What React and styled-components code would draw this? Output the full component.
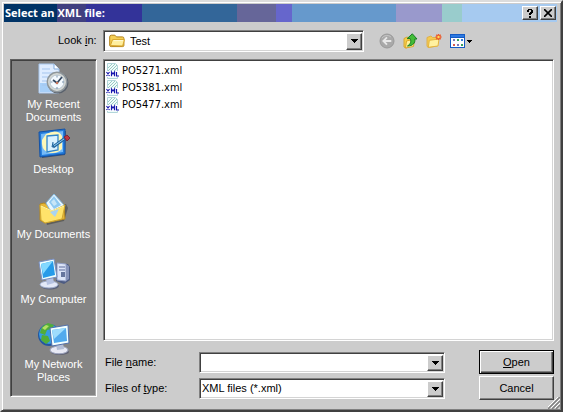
import React, { useState } from "react";
import styled, { createGlobalStyle } from "styled-components";

const GlobalStyle = createGlobalStyle`
  *, *::before, *::after { box-sizing: border-box; }
  body { margin: 0; background: #ccc; }
  body, button, input, select { font: 11px/13px "Liberation Sans", Arial, sans-serif; color: #000; }
`;

const Dialog = styled.main`
  display: flex;
  flex-direction: column;
  min-height: 100vh;
  padding: 2px 4px 10px 2px;
  background: #ccc;
  border: 2px solid;
  border-color: #dcdcdc #404040 #404040 #dcdcdc;
  box-shadow: inset 1px 1px #fff, inset -1px -1px #808080;
`;

const TitleBar = styled.header`
  display: flex;
  align-items: center;
  height: 18px;
  flex: none;
  padding: 0 1px;
  background: linear-gradient(90deg,
    #003366 53px, #404080 53px 82px, #333399 82px 138px, #336699 138px 233px,
    #666699 233px 272px, #6666cc 272px 288px, #6699cc 288px 392px,
    #9999cc 392px 438px, #99cccc 438px 458px, #a6caf0 458px);
`;

const Title = styled.h1`
  flex: 1;
  margin: 0;
  font: bold 11px/16px "Open Sans", "Noto Sans", sans-serif;
  color: #fff;
`;

const CaptionButtons = styled.div`
  display: flex;
  gap: 2px;
`;

const BevelButton = styled.button`
  display: flex;
  align-items: center;
  justify-content: center;
  padding: 0;
  background: #ccc;
  border: 1px solid;
  border-color: #fff #404040 #404040 #fff;
  box-shadow: inset -1px -1px #808080;
`;

const CaptionButton = styled(BevelButton)`
  width: 16px;
  height: 14px;
`;

const Toolbar = styled.div`
  display: flex;
  align-items: center;
  height: 37px;
  padding: 0 3px 0 54px;
`;

const FieldLabel = styled.label`
  white-space: nowrap;
`;

const LookInLabel = styled(FieldLabel)`
  width: 45px;
`;

const Combo = styled.div`
  flex: 1;
  display: grid;
  grid-template-columns: 1fr 16px;
  align-items: stretch;
  height: ${(p) => (p.$tall ? 22 : 21)}px;
  min-width: 0;
  background: #fff;
  border: 1px solid;
  border-color: #808080 #fff #fff #808080;
  box-shadow: inset 1px 1px #404040, inset -1px -1px #d4d4d4;
  padding: 2px 1px 1px 2px;
`;

const Select = styled.select`
  grid-area: 1 / 1 / 2 / 3;
  appearance: none;
  min-width: 0;
  padding: 0 18px 0 ${(p) => (p.$withIcon ? 24 : 0)}px;
  border: 0;
  border-radius: 0;
  background: transparent;
  outline: none;
`;

const TextInput = styled.input`
  min-width: 0;
  padding: 0 2px;
  border: 0;
  outline: none;
`;

const ComboIcon = styled.span`
  grid-area: 1 / 1 / 2 / 2;
  display: flex;
  align-items: center;
  padding-left: 3px;
  pointer-events: none;
`;

const ComboArrow = styled(BevelButton)`
  grid-area: 1 / 2 / 2 / 3;
  pointer-events: ${(p) => (p.as === "span" ? "none" : "auto")};
`;

const Tools = styled.div`
  display: flex;
  align-items: center;
  gap: 8px;
  width: 190px;
  padding-left: 15px;
`;

const ToolButton = styled.button`
  display: flex;
  align-items: center;
  padding: 0;
  border: 0;
  background: none;
`;

const Body = styled.div`
  flex: 1;
  display: grid;
  grid-template-columns: 87px minmax(0, 1fr);
  gap: 6px;
  padding: 0 3px 0 6px;
`;

const Places = styled.nav`
  align-self: start;
  display: flex;
  flex-direction: column;
  padding: 3px 1px 8px;
  background: #848484;
  border: 1px solid;
  border-color: #606060 #fff #fff #606060;
  box-shadow: inset 1px 1px #404040, inset -1px -1px #aaa;
`;

const Place = styled.button`
  display: flex;
  flex-direction: column;
  align-items: center;
  gap: 3px;
  height: 65px;
  padding: 0;
  border: 0;
  background: none;
  color: #fff;
`;

const PlaceName = styled.span`
  max-width: 78px;
`;

const Main = styled.section`
  display: flex;
  flex-direction: column;
  gap: 9px;
  min-width: 0;
`;

const FileList = styled.ul`
  flex: 1;
  margin: 0;
  padding: 2px;
  list-style: none;
  background: #fff;
  border: 1px solid;
  border-color: #808080 #fff #fff #808080;
  box-shadow: inset 1px 1px #404040, inset -1px -1px #d4d4d4;
`;

const FileRow = styled.li`
  display: flex;
  align-items: center;
  gap: 3px;
  height: 17px;
  font: 11px/17px "DejaVu Sans Condensed", "DejaVu Sans", sans-serif;
`;

const Form = styled.form`
  display: grid;
  grid-template-columns: minmax(0, 1fr) 75px;
  column-gap: 34px;
  row-gap: 2px;
  align-items: center;
`;

const Field = styled.div`
  display: grid;
  grid-template-columns: 94px minmax(0, 1fr);
  align-items: center;
  padding-left: 2px;
`;

const ActionButton = styled(BevelButton)`
  display: block;
  height: 24px;
  ${(p) => p.$primary && `
    border-color: #000;
    box-shadow: inset 1px 1px #fff, inset -1px -1px #404040, inset -2px -2px #808080;
  `}
`;

const Grip = styled.svg`
  position: absolute;
  right: 3px;
  bottom: 3px;
`;

const Frame = styled.div`
  position: relative;
`;

const Arrow = () => (
  <svg width="7" height="4" viewBox="0 0 7 4" shapeRendering="crispEdges" aria-hidden="true">
    <path d="M0 0h7v1H6v1H5v1H4v1H3V3H2V2H1V1H0z" />
  </svg>
);

const FolderIcon = () => (
  <svg width="16" height="14" viewBox="0 0 16 14" aria-hidden="true">
    <path d="M.7 11V3Q.7 1.2 2.3 1.2h3.6l1.6 1.7h6q1.4 0 1.4 1.5v7q0 1.2-1.4 1.2H2.2Q.7 12.6.7 11z" fill="#f5cf55" stroke="#b28219" />
    <path d="M1.4 11.6 3.5 5.6h12L13.6 12z" fill="#ffef9e" stroke="#d7a52b" />
    <path d="M4.5 6.6h9.5" stroke="#fffbd8" />
  </svg>
);

const BackIcon = () => (
  <svg width="16" height="16" viewBox="0 0 16 16" aria-hidden="true">
    <circle cx="8" cy="8" r="7" fill="#a9a9a9" stroke="#999" />
    <path d="M3 5a6 6 0 0 1 9-1" fill="none" stroke="#c4c4c4" />
    <path d="M12.3 8H4.6M8 4.3 4.3 8 8 11.7" fill="none" stroke="#e8e8e8" strokeWidth="1.8" />
  </svg>
);

const UpIcon = () => (
  <svg width="15" height="16" viewBox="0 0 15 16" aria-hidden="true">
    <path d="M1 5.5 4 4l2 1.2 4-1.5v9L3 15l-2-1z" fill="#f4cf48" stroke="#d5a638" />
    <path d="m2.5 15 1-7 8-2-1 7.5z" fill="#fff29c" stroke="#dda72c" />
    <path d="M4.5 13C9.6 13 12.6 10 11.8 6H14L9.3.8 4.2 5.6h3C8.4 8.7 7.8 10.9 4.5 13z" fill="#43bd38" stroke="#187d25" />
  </svg>
);

const NewFolderIcon = () => (
  <svg width="16" height="16" viewBox="0 0 16 16" aria-hidden="true">
    <path d="M1 4.5 5 3l1.5 1.5H11V13L2 14.5 1 13z" fill="#f4cb51" stroke="#dfb04a" />
    <path d="m2.3 14.3 1-7L13 6l-1 7z" fill="#fff1a0" stroke="#e3b33e" />
    <path d="M12.5 1v6M9.5 4h6M10.3 1.8l4.4 4.4M14.7 1.8l-4.4 4.4" stroke="#eb5a2c" strokeWidth="1.4" />
    <circle cx="12.5" cy="4" r="1.2" fill="#ffdc57" />
  </svg>
);

const ViewIcon = () => (
  <svg width="22" height="16" viewBox="0 0 22 16" shapeRendering="crispEdges" aria-hidden="true">
    <path d="M0 1h15v14H0z" fill="#155bc4" />
    <path d="M1 2h13v2H1z" fill="#2c79e2" />
    <path d="M1 5h13v9H1z" fill="#fff" />
    <path d="M3 6h2v2H3zM7 11h2v2H7z" fill="#7d78b8" />
    <path d="M7 6h2v2H7zM11 11h2v2h-2z" fill="#3aa15b" />
    <path d="M11 6h2v2h-2z" fill="#397dd6" />
    <path d="M3 11h2v2H3z" fill="#d85a4e" />
    <path d="M17 7h5v1h-1v1h-1v1h-1V9h-1V8h-1z" />
  </svg>
);

const XmlIcon = () => (
  <svg width="13" height="16" viewBox="0 0 13 16" aria-hidden="true">
    <path d="M1.5.5h8l2 2v13h-10z" fill="#f1fbfb" stroke="#b2d6da" />
    <path d="m2 5 4-4M2 8l7-7M4 9l7-7M7 9l4-4" stroke="#98ccc3" />
    <path d="M0 8h13v6H0z" fill="#fff" />
    <path d="m.5 9 3 4m0-4-3 4M5.5 13.3V9l1.5 2 1.5-2v4.3M10.5 9v4H13" fill="none" stroke="#1616ad" strokeWidth="1.2" />
  </svg>
);

const LargeIcon = ({ children }) => (
  <svg width="32" height="32" viewBox="0 0 32 32" aria-hidden="true">{children}</svg>
);

const RecentIcon = () => (
  <LargeIcon>
    <path d="M1 1h15l5 5v24H1z" fill="#deecff" stroke="#a9c8ee" />
    <path d="M2 20h18v9H2z" fill="#a7cff8" />
    <path d="M16 1v5h5" fill="#fff" stroke="#83acdc" />
    <path d="M4 6h8M4 10h11M4 14h8M4 18h6M4 22h5" stroke="#a5c5ee" />
    <circle cx="20" cy="20" r="10.5" fill="#5a626d" />
    <circle cx="19" cy="19" r="9.7" fill="#d5d8d4" stroke="#8f979c" strokeWidth="1.5" />
    <circle cx="19" cy="19" r="7" fill="#f4faff" stroke="#b8c5d0" />
    <path d="m15 17 4 3 5-6" fill="none" stroke="#34475f" strokeWidth="1.7" />
    <path d="M19 12.5v2M19 24v2M12.5 19h2M24 19h2" stroke="#7991aa" />
    <circle cx="19" cy="20" r="1.3" fill="#c9755a" />
  </LargeIcon>
);

const DesktopIcon = () => (
  <LargeIcon>
    <path d="M4 5 28 3l-1 24-23 3z" fill="#243957" opacity=".7" />
    <path d="M1 4 27 1v25L2 29z" fill="#227bdb" stroke="#1452a5" />
    <path d="m3 6 22-3v21L4 27z" fill="#75baf8" />
    <path d="M8 6Q20 0 24 8v13Q18 27 9 24 3 21 4 12z" fill="#fff8b8" />
    <path d="m9 8 11-1v15L9 24z" fill="#d9f1ff" stroke="#3285c9" strokeWidth="1.3" />
    <path d="m15 14-1 5 4-1" fill="#8fc6ec" stroke="#27689f" />
    <path d="m15 19 11-8" stroke="#24669d" strokeWidth="3" />
    <path d="m16 18 10-7" stroke="#8fcdf5" />
    <path d="m26 9 3-2 3 3-3 3z" fill="#bd3540" stroke="#7a2635" />
  </LargeIcon>
);

const DocumentsIcon = () => (
  <LargeIcon>
    <path d="m5 14 23-3 2 4-4 13-17 4z" fill="#3f3f3b" opacity=".55" />
    <path d="m2 11 4-1 4 2 16-1 1 15-20 4-5-3z" fill="#e8b735" stroke="#b58920" />
    <path d="m8 10 8-9 10 11-10 12z" fill="#e9f7ff" stroke="#85b9df" />
    <path d="m11 9 5-6 7 9-7 4z" fill="#8fc9f1" />
    <path d="m13 9 3-3 3 5-3 2z" fill="#c8e6f7" />
    <path d="m2 12 12 6 13-6-3 14-17 4-4-3z" fill="#ffe36a" stroke="#cfa731" />
    <path d="m3 13 11 5 12-5" fill="none" stroke="#fff5a5" />
    <path d="m12 19 9-3-4 8z" fill="#a9d3f1" />
  </LargeIcon>
);

const ComputerIcon = () => (
  <LargeIcon>
    <path d="m18 5 12 1 2 3v13l-6 4-8-3z" fill="#4d5b82" />
    <path d="m19 5 9 1v17l-9-1z" fill="#dce4f8" stroke="#94a0c4" />
    <path d="m28 6 3 2v13l-3 2z" fill="#8793b9" />
    <path d="M21 9h6M21 12h6" stroke="#8793b9" strokeWidth="1.3" />
    <path d="M23 14h4v5h-4z" fill="#66759e" />
    <ellipse cx="12" cy="28" rx="9" ry="3.5" fill="#59617a" />
    <ellipse cx="11" cy="26.5" rx="9" ry="3.5" fill="#e3e9f8" stroke="#9ba9c8" />
    <path d="m8 20 7-1 1 6-7 2z" fill="#b5c2e2" />
    <path d="m1 4 15-3 3 18-15 3z" fill="#efffff" stroke="#788fc2" />
    <path d="m3 6 12-3 2 14-12 3z" fill="#269be9" />
    <path d="m3 6 12-3-10 13z" fill="#83d9ff" />
  </LargeIcon>
);

const NetworkIcon = () => (
  <LargeIcon>
    <circle cx="11" cy="12" r="11" fill="#2356a0" />
    <circle cx="11" cy="11" r="10" fill="#369ce2" />
    <path d="m5 3 5-3 6 2-2 4-5 1-2 5-5-2 1-4zM4 12l6 1 2 5-4 3-5-4z" fill="#52ad38" />
    <path d="m4 5 4-3 3 1-4 4z" fill="#b3df64" />
    <ellipse cx="22" cy="29" rx="9" ry="3" fill="#606273" />
    <ellipse cx="21" cy="27" rx="9" ry="3.8" fill="#e7e9f4" stroke="#9ba2bc" />
    <path d="m18 21 7-1 1 6-7 1z" fill="#b3bed6" />
    <path d="m12 5 18-3 1 18-17 3z" fill="#f2ffff" stroke="#526faa" />
    <path d="m14 7 14-2 1 13-13 2z" fill="#52aaee" />
    <path d="m14 7 14-2-12 11z" fill="#9edcfd" />
  </LargeIcon>
);

const places = [
  ["My Recent Documents", RecentIcon],
  ["Desktop", DesktopIcon],
  ["My Documents", DocumentsIcon],
  ["My Computer", ComputerIcon],
  ["My Network Places", NetworkIcon],
];
const files = ["PO5271.xml", "PO5381.xml", "PO5477.xml"];

export default function App() {
  const [name, setName] = useState("");
  return (
    <Frame>
      <GlobalStyle />
      <Dialog>
        <TitleBar>
          <Title>Select an XML file:</Title>
          <CaptionButtons>
            <CaptionButton type="button" aria-label="Help">
              <svg width="8" height="9" viewBox="0 0 8 9" shapeRendering="crispEdges" aria-hidden="true">
                <path d="M2 0h4v1h1v3H6v1H5v1H3V4h1V3h1V1H3v2H1V1h1zM3 7h2v2H3z" />
              </svg>
            </CaptionButton>
            <CaptionButton type="button" aria-label="Close">
              <svg width="8" height="8" viewBox="0 0 8 8" aria-hidden="true">
                <path d="m0 0 8 8M8 0 0 8" stroke="#000" strokeWidth="1.6" />
              </svg>
            </CaptionButton>
          </CaptionButtons>
        </TitleBar>
        <Toolbar>
          <LookInLabel htmlFor="folder">Look <u>i</u>n:</LookInLabel>
          <Combo $tall>
            <ComboIcon><FolderIcon /></ComboIcon>
            <Select id="folder" $withIcon><option>Test</option></Select>
            <ComboArrow as="span"><Arrow /></ComboArrow>
          </Combo>
          <Tools>
            <ToolButton type="button" aria-label="Back" disabled><BackIcon /></ToolButton>
            <ToolButton type="button" aria-label="Up one level"><UpIcon /></ToolButton>
            <ToolButton type="button" aria-label="New folder"><NewFolderIcon /></ToolButton>
            <ToolButton type="button" aria-label="View menu"><ViewIcon /></ToolButton>
          </Tools>
        </Toolbar>
        <Body>
          <Places aria-label="Places">
            {places.map(([label, Icon]) => (
              <Place type="button" key={label}><Icon /><PlaceName>{label}</PlaceName></Place>
            ))}
          </Places>
          <Main>
            <FileList aria-label="Files">
              {files.map((file) => <FileRow key={file}><XmlIcon />{file}</FileRow>)}
            </FileList>
            <Form onSubmit={(e) => e.preventDefault()}>
              <Field>
                <FieldLabel htmlFor="filename">File <u>n</u>ame:</FieldLabel>
                <Combo>
                  <TextInput id="filename" value={name} onChange={(e) => setName(e.target.value)} />
                  <ComboArrow type="button" aria-label="Recent file names"><Arrow /></ComboArrow>
                </Combo>
              </Field>
              <ActionButton $primary><u>O</u>pen</ActionButton>
              <Field>
                <FieldLabel htmlFor="filetype">Files of <u>t</u>ype:</FieldLabel>
                <Combo>
                  <Select id="filetype"><option>XML files (*.xml)</option></Select>
                  <ComboArrow as="span"><Arrow /></ComboArrow>
                </Combo>
              </Field>
              <ActionButton type="button">Cancel</ActionButton>
            </Form>
          </Main>
        </Body>
      </Dialog>
      <Grip width="12" height="12" viewBox="0 0 12 12" aria-hidden="true">
        <path d="M0 12 12 0M4 12l8-8M8 12l4-4" stroke="#808080" strokeWidth="1.5" />
        <path d="M-1 11 11-1M3 11l9-9M7 11l5-5" stroke="#fff" />
      </Grip>
    </Frame>
  );
}
